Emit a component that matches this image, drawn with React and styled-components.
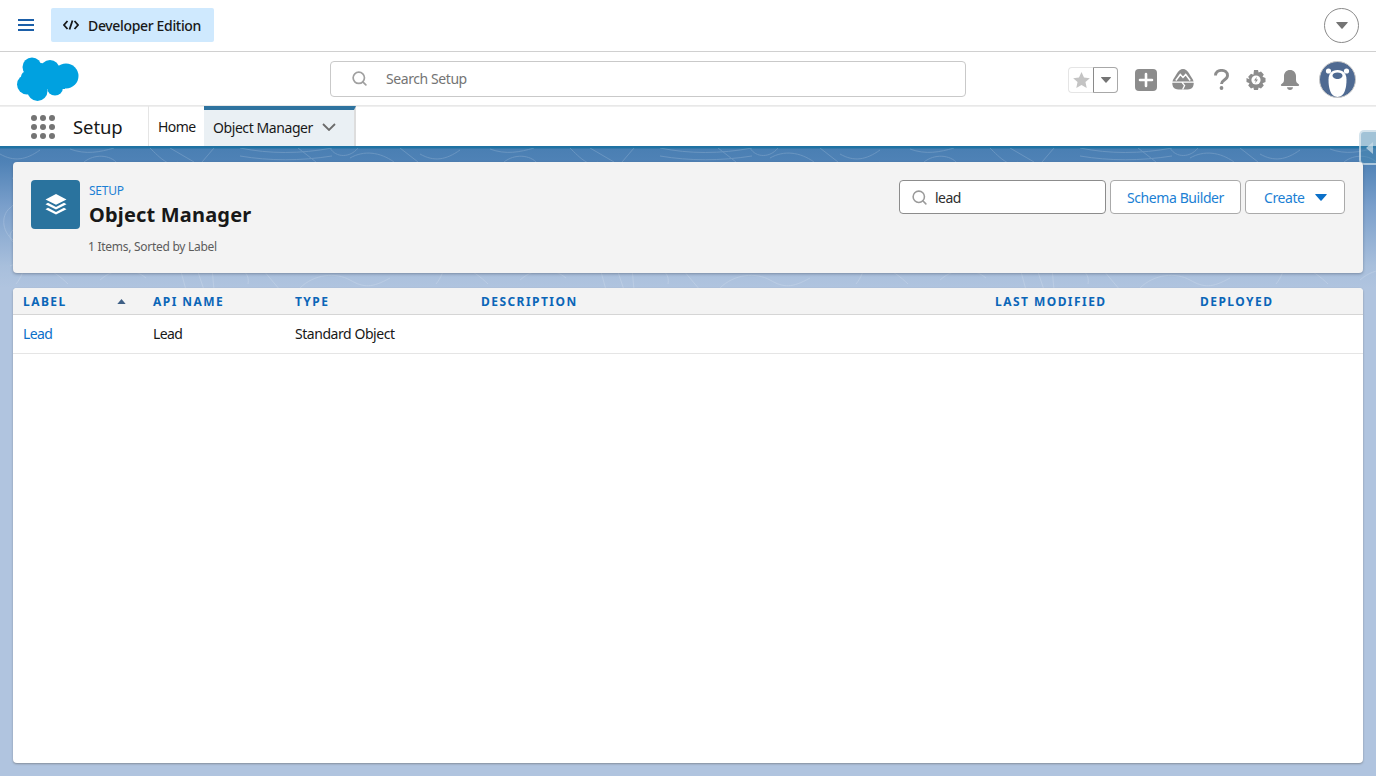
import React from 'react';
import styled, { createGlobalStyle } from 'styled-components';
import { Search } from 'lucide-react';

const Global = createGlobalStyle`
  html, body { margin: 0; padding: 0; height: 100%; overflow: hidden; }
  body { font-family: "Noto Sans", "Open Sans", sans-serif; color: #181818; background: #b0c4df; }
  * { box-sizing: border-box; }
`;

const Page = styled.div`
  width: 1376px;
  height: 776px;
  display: flex;
  flex-direction: column;
  overflow: hidden;
`;

const TopBar = styled.div`
  height: 52px;
  display: flex;
  align-items: center;
  justify-content: space-between;
  padding: 0 17px 0 18px;
  border-bottom: 1px solid #d0d0d0;
  background: #fff;
`;

const TopLeft = styled.div`
  display: flex;
  align-items: center;
  gap: 17px;
  margin-bottom: 1px;
`;

const Edition = styled.div`
  width: 163px;
  height: 34px;
  background: #cfe9fe;
  border-radius: 2px;
  display: flex;
  align-items: center;
  gap: 9px;
  padding-left: 12px;
  font-size: 14px;
  font-weight: 500;
  color: #181818;
  letter-spacing: -0.34px;
`;

const CircleButton = styled.div`
  width: 35px;
  height: 35px;
  border: 1px solid #8a8a8a;
  border-radius: 50%;
  display: flex;
  align-items: center;
  justify-content: center;
  margin-bottom: 1px;
`;

const HeaderBar = styled.div`
  height: 54px;
  display: flex;
  align-items: center;
  padding: 0 20px 0 17px;
  border-bottom: 1px solid #e8e8e8;
  background: #fff;
`;

const LogoWrap = styled.div`
  width: 313px;
  height: 46px;
  flex: none;
  margin-top: 3px;
`;

const GlobalSearch = styled.div`
  width: 636px;
  height: 36px;
  border: 1px solid #c9c9c9;
  border-radius: 4px;
  display: flex;
  align-items: center;
  padding-left: 20px;
  gap: 18px;
  font-size: 14px;
  color: #747474;
  letter-spacing: -0.42px;
`;

const Actions = styled.div`
  margin-left: auto;
  display: flex;
  align-items: center;
  margin-top: 2px;
`;

const FavGroup = styled.div`
  display: flex;
  height: 26px;
  margin-right: 16px;
`;

const FavStar = styled.div`
  width: 25px;
  border: 1px solid #e5e5e5;
  border-right: none;
  border-radius: 4px 0 0 4px;
  display: flex;
  align-items: center;
  justify-content: center;
`;

const FavMenu = styled.div`
  width: 25px;
  border: 1px solid #a8a8a8;
  border-left-color: #8a8a8a;
  border-radius: 0 4px 4px 0;
  display: flex;
  align-items: center;
  justify-content: center;
`;

const IconSlot = styled.div`
  width: 24px;
  height: 24px;
  margin-right: ${p => p.$gap}px;
  display: flex;
  align-items: center;
  justify-content: center;
`;

const Avatar = styled.div`
  width: 37px;
  height: 37px;
  border-radius: 50%;
  background: #4f6a92;
  overflow: hidden;
  border: 1px solid #c9c9c9;
`;

const NavBar = styled.div`
  height: 40px;
  display: flex;
  background: #fff;
  align-items: stretch;
  box-shadow: inset 0 1px 0 #efefef;
`;

const AppLauncher = styled.div`
  width: 149px;
  display: flex;
  align-items: center;
  padding: 1px 0 0 31px;
  gap: 18px;
  font-size: 18.5px;
  letter-spacing: -0.1px;
  color: #181818;
  border-right: 1px solid #e5e5e5;
`;

const Dots = styled.div`
  display: grid;
  grid-template-columns: repeat(3, 6px);
  gap: 3px;
`;

const Dot = styled.span`
  width: 6px;
  height: 6px;
  border-radius: 50%;
  background: #747474;
`;

const NavItem = styled.div`
  display: flex;
  align-items: center;
  font-size: 14px;
  letter-spacing: -0.6px;
  width: 55px;
  padding-left: 9px;
  color: #181818;
`;

const ActiveNavItem = styled(NavItem)`
  width: 152px;
  background: #eaf0f4;
  border-top: 4px solid #2e739f;
  border-right: 2px solid #dddddd;
  justify-content: space-between;
  letter-spacing: -0.42px;
  padding: 0 18px 2px 9px;
`;

const Content = styled.div`
  position: relative;
  flex: 1;
  display: flex;
  flex-direction: column;
  padding: 16px 13px 13px;
  background: linear-gradient(#1f72a3 0, #1f72a3 2px, #4a7fb3 3px, #4f82b6 16px, #7a9fcb 60px, #a8bfdc 120px, #b0c4df 142px);
`;

const Contours = styled.svg`
  position: absolute;
  left: 0;
  top: 2px;
  width: 100%;
  height: 142px;
`;

const HeaderCard = styled.div`
  position: relative;
  height: 111px;
  background: #f3f3f3;
  border-radius: 4px;
  box-shadow: 0 1px 3px rgba(60, 70, 90, 0.45);
  display: flex;
  justify-content: space-between;
  padding: 18px 18px 0 18px;
`;

const TitleGroup = styled.div`
  display: flex;
  gap: 9px;
  align-items: flex-start;
`;

const ObjectIcon = styled.div`
  width: 49px;
  height: 49px;
  background: #2a739e;
  border-radius: 4px;
  display: flex;
  align-items: center;
  justify-content: center;
`;

const Eyebrow = styled.div`
  font-size: 12px;
  line-height: 16px;
  margin-top: 3px;
  color: #1b7fd4;
  letter-spacing: -0.25px;
`;

const Title = styled.h1`
  margin: 1px 0 0;
  font-size: 20px;
  line-height: 30px;
  font-weight: 700;
  color: #181818;
  letter-spacing: 0.18px;
`;

const Meta = styled.div`
  font-size: 12px;
  line-height: 16px;
  margin-top: 9px;
  margin-left: -1px;
  color: #5c5c5c;
  letter-spacing: -0.28px;
`;

const Controls = styled.div`
  display: flex;
  gap: 4px;
`;

const QuickFind = styled.div`
  width: 207px;
  height: 34px;
  background: #fff;
  border: 1px solid #8c8c8c;
  border-radius: 4px;
  display: flex;
  align-items: center;
  padding-left: 11px;
  gap: 7px;
  font-size: 14px;
  color: #2e2e2e;
  letter-spacing: -0.5px;
`;

const Button = styled.div`
  width: ${p => p.$w}px;
  height: 34px;
  background: #fff;
  border: 1px solid #aaaaaa;
  border-radius: 4px;
  display: flex;
  align-items: center;
  justify-content: ${p => (p.$menu ? 'flex-start' : 'center')};
  padding-left: ${p => (p.$menu ? 18 : 0)}px;
  gap: 10px;
  font-size: 14px;
  color: #1b7fd4;
  letter-spacing: -0.42px;
`;

const TableCard = styled.div`
  position: relative;
  margin-top: 15px;
  flex: 1;
  background: #fff;
  border-radius: 4px;
  box-shadow: 0 1px 2px rgba(90, 90, 90, 0.5);
  overflow: hidden;
`;

const Row = styled.div`
  display: grid;
  grid-template-columns: 130px 142px 186px 514px 205px 1fr;
  align-items: center;
  padding-left: 10px;
`;

const HeadRow = styled(Row)`
  height: 27px;
  background: #f3f3f3;
  border-bottom: 1px solid #d5d5d5;
`;

const BodyRow = styled(Row)`
  height: 39px;
  padding-bottom: 2px;
  border-bottom: 1px solid #e5e5e5;
`;

const HeadCell = styled.div`
  display: flex;
  align-items: center;
  justify-content: space-between;
  padding-right: 27px;
  font-size: 12px;
  font-weight: 700;
  color: #0b66b8;
  letter-spacing: 1.45px;
  text-transform: uppercase;
`;

const Cell = styled.div`
  font-size: 14px;
  letter-spacing: ${p => (p.$tight ? '-0.65px' : '-0.45px')};
  color: ${p => (p.$link ? '#0b70c9' : '#181818')};
`;

const SideHandle = styled.div`
  position: absolute;
  right: 0;
  top: -16px;
  width: 17px;
  height: 35px;
  background: rgba(70, 135, 175, 0.5);
  border: 2px solid rgba(255, 255, 255, 0.55);
  border-right: none;
  border-radius: 5px 0 0 5px;
  display: flex;
  align-items: center;
  justify-content: flex-end;
  padding-right: 3px;
`;

const Caret = ({ color = '#747474', w = 11, h = 6 }) => (
  <svg width={w} height={h} viewBox="0 0 10 6"><path d="M0.5 0h9a.4.4 0 0 1 .3.7L5.3 5.7a.4.4 0 0 1-.6 0L.2.7A.4.4 0 0 1 .5 0z" fill={color} /></svg>
);

const SortCaret = () => (
  <svg width="9" height="5" viewBox="0 0 10 6"><path d="M5 0l5 6H0z" fill="#3e5f85" /></svg>
);

const Cloud = () => (
  <svg width="62" height="46" viewBox="0 0 62 46">
    <g fill="#00a1e0">
      <circle cx="15" cy="10" r="9.500" />
      <circle cx="24" cy="14" r="8" />
      <circle cx="33" cy="12.500" r="9.500" />
      <circle cx="49" cy="19" r="12.500" />
      <circle cx="10" cy="27.500" r="10" />
      <circle cx="10" cy="20" r="6" />
      <circle cx="20.500" cy="34" r="10" />
      <circle cx="38" cy="30.500" r="8" />
      <rect x="10" y="12" width="38" height="20" />
    </g>
  </svg>
);

const App = () => (
  <Page>
    <Global />
    <TopBar>
      <TopLeft>
        <svg width="16" height="14" viewBox="0 0 16 14">
          <path d="M0 2h16M0 7h16M0 12h16" stroke="#1b5fa8" strokeWidth="2" />
        </svg>
        <Edition>
          <svg width="16" height="10" viewBox="0 0 16 10" fill="none" stroke="#181818" strokeWidth="1.800">
            <path d="M4.500 1L1 5l3.500 4M11.500 1L15 5l-3.500 4M9.500 .5L6.500 9.500" />
          </svg>
          Developer Edition
        </Edition>
      </TopLeft>
      <CircleButton><Caret w={12} h={7} /></CircleButton>
    </TopBar>

    <HeaderBar>
      <LogoWrap><Cloud /></LogoWrap>
      <GlobalSearch>
        <Search size={17} color="#a0a0a0" strokeWidth={2.400} />
        Search Setup
      </GlobalSearch>
      <Actions>
        <FavGroup>
          <FavStar>
            <svg width="17" height="16" viewBox="0 0 24 23"><path d="M12 0l3.600 8 8.400.9-6.300 5.600 1.800 8.500L12 18.600 4.500 23l1.800-8.500L0 8.900 8.400 8z" fill="#c4c4c4" /></svg>
          </FavStar>
          <FavMenu><Caret w={10} h={6} /></FavMenu>
        </FavGroup>
        <IconSlot $gap={13}>
          <svg width="22" height="22" viewBox="0 0 22 22">
            <rect width="22" height="22" rx="4" fill="#8c8c8c" />
            <path d="M11 5v12M5 11h12" stroke="#fff" strokeWidth="2.600" strokeLinecap="round" />
          </svg>
        </IconSlot>
        <IconSlot $gap={14}>
          <svg width="22" height="21" viewBox="0 0 22 21">
            <path d="M11 0c2.600 0 4.400 1.800 5.800 4L20.800 10.500C22 13 22 15 21 17.500 20 19.800 18 20.500 15.500 20.500h-9C4 20.500 2 19.800 1 17.500 0 15 0 13 1.200 10.500L5.200 4C6.600 1.800 8.400 0 11 0z" fill="#8c8c8c" />
            <path d="M3.800 11.500L8.300 5.500l2.700 3 2.700-3 4.500 6" fill="none" stroke="#fff" strokeWidth="1.500" />
            <path d="M0 13.200h22M9.800 13.200l2.800 3.300-2 4" fill="none" stroke="#fff" strokeWidth="1.300" />
          </svg>
        </IconSlot>
        <IconSlot $gap={11}>
          <svg width="15" height="21" viewBox="0 0 15 21" fill="none">
            <path d="M1.500 6.500C1.500 3.200 4.200 1.400 7.500 1.400S13.500 3.200 13.500 6.500c0 2.200-1.300 3.200-2.900 4.300S7.500 12.500 7.500 15" stroke="#8c8c8c" strokeWidth="2.900" />
            <circle cx="7.500" cy="19" r="1.900" fill="#8c8c8c" />
          </svg>
        </IconSlot>
        <IconSlot $gap={10}>
          <svg width="20" height="20" viewBox="0 0 20 20">
            <path d="M8 0h4l.6 2.600 2.400-1 2.800 3-1.300 2.200L19.500 8v4l-3 1.200 1.300 2.200-2.800 3-2.400-1L12 20H8l-.6-2.600-2.400 1-2.800-3 1.300-2.200L.5 12V8l3 1.200-1.300-2.400 2.800-3 2.400 1z" fill="#8c8c8c" />
            <circle cx="10" cy="10" r="4.600" fill="#fff" />
            <path d="M10.800 6.800L8 10.600h1.800l-.6 2.600 2.800-3.800h-1.800z" fill="#8c8c8c" />
          </svg>
        </IconSlot>
        <IconSlot $gap={17}>
          <svg width="20" height="20" viewBox="0 0 20 20">
            <path d="M10 0c3.600 0 6 2.700 6 6v4c0 2 1 3 2.700 4.200.8.600.5 1.800-.5 1.800H1.800c-1 0-1.300-1.200-.5-1.800C3 13 4 12 4 10V6c0-3.300 2.400-6 6-6z" fill="#8c8c8c" />
            <path d="M7 17.200h6c0 1.600-1.300 2.800-3 2.800s-3-1.200-3-2.800z" fill="#8c8c8c" />
          </svg>
        </IconSlot>
        <Avatar>
          <svg width="35" height="35" viewBox="0 0 35 35">
            <circle cx="8.500" cy="9" r="2.600" fill="#fff" />
            <circle cx="26.500" cy="9" r="2.600" fill="#fff" />
            <path d="M17.500 8c6 0 9 4 9 9.500C26.500 25 25 35 17.500 35S8.500 25 8.500 17.500C8.500 12 11.500 8 17.500 8z" fill="#fff" />
            <path d="M12.500 13.500c0-2 2.500-3 5-3s5 1 5 3-2.500 3.500-5 3.500-5-1.500-5-3.500z" fill="#4f6a92" />
          </svg>
        </Avatar>
      </Actions>
    </HeaderBar>

    <NavBar>
      <AppLauncher>
        <Dots>{Array.from({ length: 9 }).map((_, i) => <Dot key={i} />)}</Dots>
        Setup
      </AppLauncher>
      <NavItem>Home</NavItem>
      <ActiveNavItem>
        Object Manager
        <svg width="14" height="8" viewBox="0 0 14 8" fill="none">
          <path d="M1 1l6 6 6-6" stroke="#6b6b6b" strokeWidth="1.800" />
        </svg>
      </ActiveNavItem>
    </NavBar>

    <Content>
      <Contours fill="none" stroke="#ffffff" strokeWidth="1">
        <defs>
          <pattern id="topo" width="420" height="142" patternUnits="userSpaceOnUse">
            <g opacity="0.16">
              <path d="M0 6c14 8 26 6 40-4M70 1c16 6 30 3 44-1M84 14c10-8 26-8 34 2M150 0c10 10 20 20 28 14M170 0l24 14M298 0l18 14M330 0c6 10 20 10 28 0" />
              <path d="M40 14c-16 10-24 26-12 40s30 6 34 24-16 30-2 46M12 30c14 4 8 22-2 30s-8 26 6 34 10 30 0 42" />
              <path d="M214 0l-12 14M240 0c30 6 60 6 92 0M240 8c30 5 60 5 92 0M350 10c14-8 30-6 44 4M400 0l18 14" />
              <path d="M10 118c20-10 44 4 58 18M100 132c16-14 34-12 46-2M180 120l6 22M196 118l8 24M212 120l2 22M232 124c10-6 18 2 16 12M258 116l22 26M300 140c14-14 36-16 50-8s22 8 40-2" />
              <ellipse cx="32" cy="88" rx="22" ry="12" />
              <ellipse cx="30" cy="112" rx="12" ry="6" />
            </g>
          </pattern>
        </defs>
        <rect width="1376" height="142" fill="url(#topo)" stroke="none" />
      </Contours>
      <SideHandle>
        <svg width="7" height="12" viewBox="0 0 7 12"><path d="M7 0v12L0 6z" fill="#cfe0ea" opacity="0.7" /></svg>
      </SideHandle>
      <HeaderCard>
        <TitleGroup>
          <ObjectIcon>
            <svg width="22" height="21" viewBox="0 0 22 21" fill="#fff">
              <path d="M11 0l10.500 5.400L11 10.800.500 5.400z" />
              <path d="M3 8.800l8 4.100 8-4.100 2.500 1.400L11 15.600.500 10.200z" />
              <path d="M3 13.800l8 4.100 8-4.100 2.500 1.400L11 20.600.500 15.200z" />
            </svg>
          </ObjectIcon>
          <div>
            <Eyebrow>SETUP</Eyebrow>
            <Title>Object Manager</Title>
            <Meta>1 Items, Sorted by Label</Meta>
          </div>
        </TitleGroup>
        <Controls>
          <QuickFind>
            <Search size={17} color="#9a9a9a" strokeWidth={2.200} />
            lead
          </QuickFind>
          <Button $w={131}>Schema Builder</Button>
          <Button $w={100} $menu>Create <Caret color="#0b70c9" w={12} h={7} /></Button>
        </Controls>
      </HeaderCard>
      <TableCard>
        <HeadRow>
          <HeadCell>Label <SortCaret /></HeadCell>
          <HeadCell>API Name</HeadCell>
          <HeadCell>Type</HeadCell>
          <HeadCell>Description</HeadCell>
          <HeadCell>Last Modified</HeadCell>
          <HeadCell>Deployed</HeadCell>
        </HeadRow>
        <BodyRow>
          <Cell $link $tight>Lead</Cell>
          <Cell $tight>Lead</Cell>
          <Cell>Standard Object</Cell>
          <Cell />
          <Cell />
          <Cell />
        </BodyRow>
      </TableCard>
    </Content>
  </Page>
);

export default App;
